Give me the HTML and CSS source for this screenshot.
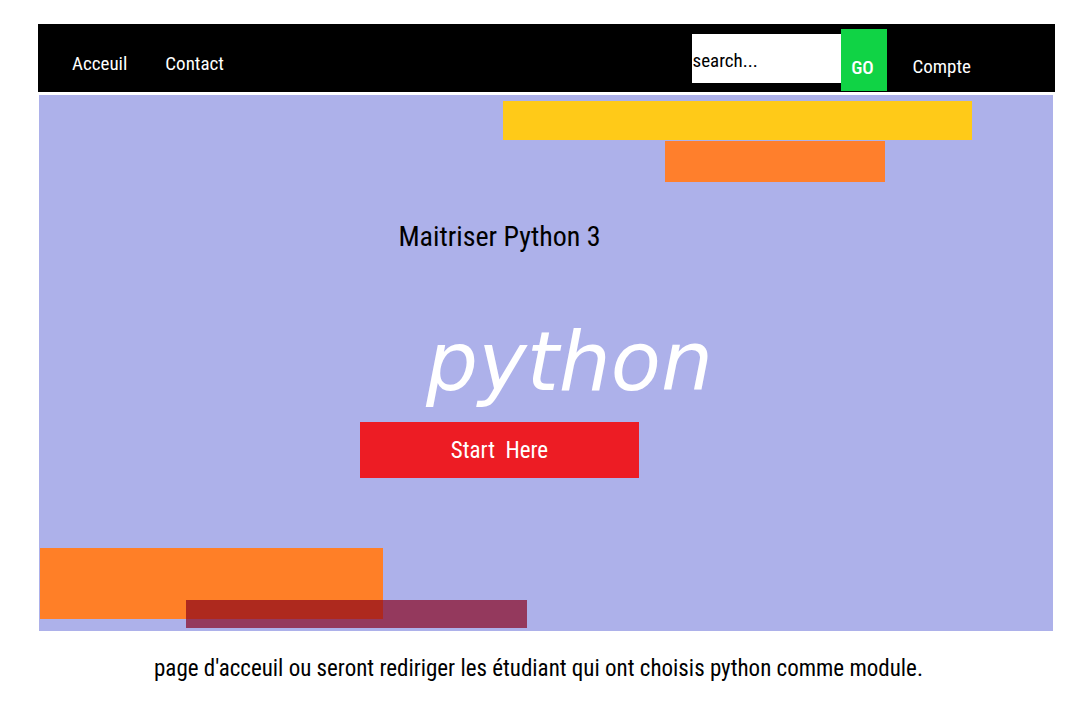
FILE: index.html
```html
<!DOCTYPE html>
<html lang="fr">
<head>
<meta charset="utf-8">
<meta name="viewport" content="width=device-width, initial-scale=1">
<title>Maitriser Python 3</title>
<link rel="stylesheet" href="styles.css">
</head>
<body>
<div class="page">
  <header class="topbar">
    <nav class="menu">
      <a class="link" href="#accueil">Acceuil</a>
      <a class="link" href="#contact">Contact</a>
    </nav>
    <form class="search">
      <input class="field" type="text" value="search..." aria-label="search">
      <button class="go" type="submit">GO</button>
    </form>
    <a class="link account" href="#compte">Compte</a>
  </header>
  <main class="hero">
    <div class="bar bar-yellow"></div>
    <div class="bar bar-orange"></div>
    <div class="content">
      <h1 class="title">Maitriser Python 3</h1>
      <p class="wordmark">python</p>
      <button class="start" type="button">Start&nbsp; Here</button>
    </div>
    <div class="corner">
      <div class="bar bar-maroon"></div>
    </div>
  </main>
  <p class="caption">page d'acceuil ou seront rediriger les étudiant qui ont choisis python comme module.</p>
</div>
</body>
</html>
```
FILE: styles.css
```css
* {
  box-sizing: border-box;
}

body {
  margin: 0;
  background: #fff;
  color: #000;
  font-family: "Roboto Condensed", Roboto, sans-serif;
}

.page {
  padding: 24px 25px 16px 38px;
}

.topbar {
  display: flex;
  min-height: 68px;
  padding: 5px 84px 1px 34px;
  background: #000;
}

.menu {
  display: flex;
  gap: 38px;
  margin-right: auto;
}

.link {
  padding-top: 23px;
  color: #fff;
  font-size: 19px;
  line-height: 24px;
  text-decoration: none;
}

.search {
  display: flex;
  align-items: flex-start;
  margin-right: 25px;
}

.field {
  width: 149px;
  height: 49px;
  margin-top: 5px;
  padding: 4px 0 0;
  border: 0;
  background: #fff;
  color: #000;
  font: inherit;
  font-size: 19px;
}

.go {
  align-self: stretch;
  width: 46px;
  padding: 14px 4px 0 0;
  border: 0;
  background: #10d345;
  color: #fff;
  font: inherit;
  font-size: 19px;
  font-weight: 500;
}

.account {
  padding-top: 26px;
}

.hero {
  min-height: 536px;
  margin: 3px 2px 0 1px;
  padding: 6px 0 3px 1px;
  background: #adb1ea;
}

.bar {
  max-width: 100%;
}

.bar-yellow {
  width: 469px;
  height: 39px;
  margin: 0 81px 1px auto;
  background: #ffca18;
}

.bar-orange {
  width: 220px;
  height: 41px;
  margin: 0 168px 0 auto;
  background: #ff7f2c;
}

.content {
  display: flex;
  flex-direction: column;
  align-items: center;
  padding: 37px 94px 70px 0;
}

.title {
  margin: 0;
  font-size: 28px;
  font-weight: 400;
  line-height: 36px;
}

.wordmark {
  margin: 64px 0 17px 140px;
  color: #fff;
  font-family: "Segoe Script", "Bradley Hand", "DejaVu Sans", cursive;
  font-size: 82px;
  font-style: italic;
  line-height: 86px;
}

.start {
  width: 279px;
  height: 56px;
  padding: 0;
  border: 0;
  background: #ed1c24;
  color: #fff;
  font: inherit;
  font-size: 23px;
}

.corner {
  position: relative;
  width: 343px;
  height: 71px;
  background: #ff7f27;
}

.bar-maroon {
  position: absolute;
  top: 52px;
  left: 146px;
  width: 341px;
  max-width: none;
  height: 28px;
  background: rgba(136, 0, 27, 0.68);
}

.caption {
  margin: 24px 0 0;
  padding-right: 16px;
  font-size: 23px;
  line-height: 28px;
  text-align: center;
}
```
